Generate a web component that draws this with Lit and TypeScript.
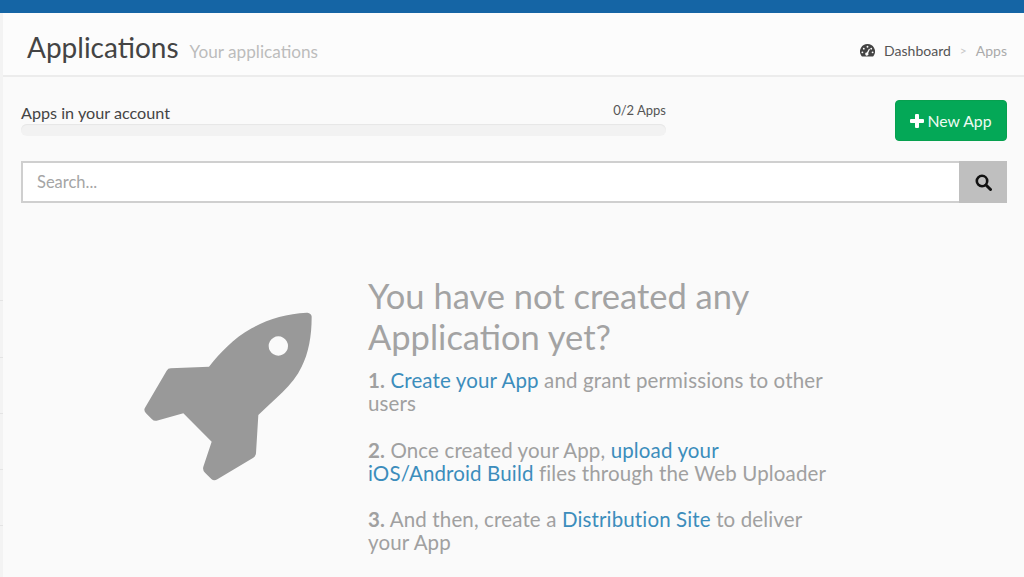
import { LitElement, html, css } from "lit";
import { customElement } from "lit/decorators.js";

@customElement("app-root")
export class AppRoot extends LitElement {
  static styles = css`
    :host { display: block; height: 577px; overflow: hidden; background: #fafafa; color: #444; font-family: Lato, "Open Sans", sans-serif; }
    * { box-sizing: border-box; }
    .top { height: 13px; background: #1565a5; }
    .wrap { display: flex; height: 564px; }
    .rail { width: 3px; background: #f3f3f3; display: flex; flex-direction: column; padding-top: 232px; }
    .rail i { display: block; height: 56.3px; border-bottom: 1px solid #e4e4e4; }
    .main { flex: 1; min-width: 0; }
    .head { height: 64px; background: #fcfcfc; border-bottom: 2px solid #ececec; display: flex; align-items: baseline; padding: 17px 17px 0 24px; }
    h1 { margin: 0; font-size: 28px; line-height: 34px; font-weight: 400; color: #444; }
    .sub { margin-left: 11px; font-size: 17.2px; color: #bcbcbc; }
    .crumbs { margin-left: auto; display: flex; align-items: center; font-size: 14px; align-self: flex-start; padding-top: 12px; color: #555; }
    .crumbs svg { width: 15px; height: 13px; margin-right: 9px; }
    .sep { margin: 0 9px; color: #c8c8c8; font-size: 12px; }
    .muted { color: #aaa; }
    .content { padding: 0 17px 0 18px; }
    .quota { display: flex; justify-content: space-between; align-items: flex-start; padding-top: 22px; }
    .meter { width: 645px; }
    .labels { display: flex; justify-content: space-between; align-items: flex-end; height: 23px; font-size: 16.2px; color: #444; }
    .labels small { font-size: 13px; padding-bottom: 4px; color: #555; }
    .bar { height: 12px; margin-top: 2px; border-radius: 6px; background: #f2f2f2; box-shadow: inset 0 1px 1px #e6e6e6; }
    .btn { width: 112px; height: 41px; margin-top: 1px; border: 1px solid #07a04f; border-radius: 4px; background: #04a857; color: #eefbf3; font: 400 15.8px Lato, sans-serif; display: flex; align-items: center; justify-content: center; gap: 3px; }
    .btn svg { width: 14px; height: 14px; }
    .search { display: flex; height: 42px; margin-top: 20px; border: 2px solid #cfcfcf; background: #fff; }
    .search .ph { flex: 1; padding-left: 14px; font-size: 16.5px; line-height: 38px; color: #a5a5a5; }
    .search .go { width: 48px; margin: -2px -2px -2px 0; background: #bfbfbf; display: flex; align-items: center; justify-content: center; }
    .search svg { width: 17px; height: 17px; }
    .empty { display: flex; padding-top: 72px; }
    .rocket { width: 347px; flex: none; padding: 25px 0 0 109px; }
    .rocket svg { display: block; width: 200px; height: 190px; }
    .text { width: 460px; color: #a0a0a0; font-size: 20.5px; letter-spacing: 0.14px; line-height: 23px; }
    h2 { margin: 0 0 12px; font-size: 34.5px; line-height: 41px; letter-spacing: 0; font-weight: 400; color: #a3a3a3; }
    p { margin: 0 0 23.5px; }
    a { color: #3c8dbc; text-decoration: none; }
    b { font-weight: 700; color: #a0a0a0; }
  `;

  render() {
    return html`
      <div class="top"></div>
      <div class="wrap">
        <div class="rail"><i></i><i></i><i></i><i></i><i></i></div>
        <div class="main">
          <div class="head">
            <h1>Applications</h1>
            <span class="sub">Your applications</span>
            <div class="crumbs">
              <svg viewBox="0 0 16 14"><path fill="#444" fill-rule="evenodd" d="M8 0a8 8 0 0 1 7 12l-1 1.5H2L1 12A8 8 0 0 1 8 0Zm0 2a1 1 0 1 0 0 2 1 1 0 0 0 0-2ZM4 4a1 1 0 1 0 0 2 1 1 0 0 0 0-2Zm8 0a1 1 0 1 0 0 2 1 1 0 0 0 0-2ZM2.5 8a1 1 0 1 0 0 2 1 1 0 0 0 0-2Zm11 0a1 1 0 1 0 0 2 1 1 0 0 0 0-2ZM9.6 5 7.3 9.1a1.7 1.7 0 1 0 1.4.8l2-4.4Z"/></svg>
              <span>Dashboard</span><span class="sep">&gt;</span><span class="muted">Apps</span>
            </div>
          </div>
          <div class="content">
            <div class="quota">
              <div class="meter">
                <div class="labels"><span>Apps in your account</span><small>0/2 Apps</small></div>
                <div class="bar"></div>
              </div>
              <div class="btn">
                <svg viewBox="0 0 14 14"><path fill="#fff" d="M5 1a1 1 0 0 1 1-1h2a1 1 0 0 1 1 1v4h4a1 1 0 0 1 1 1v2a1 1 0 0 1-1 1H9v4a1 1 0 0 1-1 1H6a1 1 0 0 1-1-1V9H1a1 1 0 0 1-1-1V6a1 1 0 0 1 1-1h4Z"/></svg>
                <span>New App</span>
              </div>
            </div>
            <div class="search">
              <div class="ph">Search...</div>
              <div class="go"><svg viewBox="0 0 17 17"><circle cx="7" cy="7" r="5.2" fill="none" stroke="#111" stroke-width="2.6"/><path d="m11 11 4.5 4.5" stroke="#111" stroke-width="3" stroke-linecap="round"/></svg></div>
            </div>
            <div class="empty">
              <div class="rocket">
                <svg viewBox="0 0 600 570"><path fill="#999" fill-rule="evenodd" d="M530 38C536 38 545 42 545 50C545 110 535 160 515 200C490 255 430 300 385 345L378 460Q378 468 370 473L262 538Q252 544 244 537L225 518Q217 510 220 500L245 425L160 340L80 362Q72 364 66 358L48 340Q40 331 45 323L110 212Q114 205 122 205L237 200C270 160 310 115 365 85C415 55 470 42 530 38ZM445 109a29 29 0 1 0 .01 0Z"/></svg>
              </div>
              <div class="text">
                <h2>You have not created any Application yet?</h2>
                <p><b>1.</b> <a>Create your App</a> and grant permissions to other users</p>
                <p><b>2.</b> Once created your App, <a>upload your iOS/Android Build</a> files through the Web Uploader</p>
                <p><b>3.</b> And then, create a <a>Distribution Site</a> to deliver your App</p>
              </div>
            </div>
          </div>
        </div>
      </div>
    `;
  }
}
